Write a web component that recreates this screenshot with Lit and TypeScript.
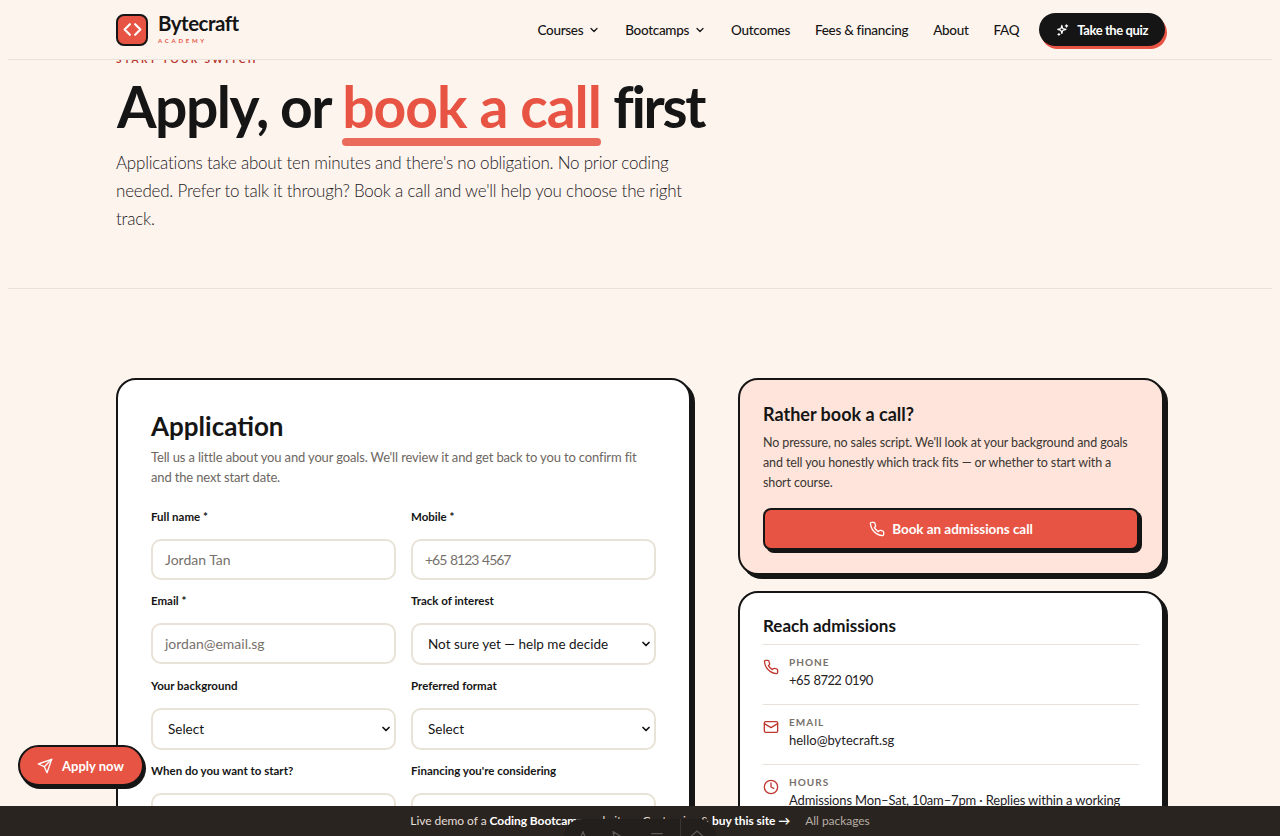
import { LitElement, html, css, svg } from "lit";
import { customElement } from "lit/decorators.js";

const ic = (body: unknown, cls = "ic") => html`<svg class=${cls} viewBox="0 0 24 24" fill="none" stroke="currentColor" stroke-width="2" stroke-linecap="round" stroke-linejoin="round">${body}</svg>`;
const phone = svg`<path d="M22 16.92v3a2 2 0 0 1-2.18 2 19.79 19.79 0 0 1-8.63-3.07 19.5 19.5 0 0 1-6-6 19.79 19.79 0 0 1-3.07-8.67A2 2 0 0 1 4.11 2h3a2 2 0 0 1 2 1.72c.13.96.36 1.9.7 2.81a2 2 0 0 1-.45 2.11L8.09 9.91a16 16 0 0 0 6 6l1.27-1.27a2 2 0 0 1 2.11-.45c.91.34 1.85.57 2.81.7A2 2 0 0 1 22 16.92z"/>`;
const mail = svg`<rect x="2" y="4" width="20" height="16" rx="2"/><path d="m22 7-10 6L2 7"/>`;
const clock = svg`<circle cx="12" cy="12" r="10"/><path d="M12 6v6l4 2"/>`;
const chev = svg`<path d="m6 9 6 6 6-6"/>`;
const spark = svg`<path d="M10 4l1.6 5.4L17 11l-5.4 1.6L10 18l-1.6-5.4L3 11l5.4-1.6z"/><path d="M18 3v4M16 5h4M5 18v3M3.5 19.5h3"/>`;
const send = svg`<path d="m22 2-7 20-4-9-9-4Z"/><path d="M22 2 11 13"/>`;

@customElement("app-root")
export class AppRoot extends LitElement {
  static styles = css`
    :host { display: block; height: 836px; overflow: hidden; position: relative; background: #fdf4ee; font-family: "Lato", "Noto Sans", sans-serif; color: #151515; }
    * { box-sizing: border-box; }
    .ic { width: 16px; height: 16px; flex: none; }
    .header { position: absolute; inset: 0 8px auto 8px; height: 60px; background: #fdf4ee; border-bottom: 1px solid #e9e2da; display: flex; align-items: center; padding: 0 107px 0 108px; z-index: 3; }
    .brand { display: flex; align-items: center; gap: 10px; }
    .logo { width: 32px; height: 32px; border-radius: 8px; background: #e85444; border: 2px solid #151515; color: #fff; display: flex; align-items: center; justify-content: center; }
    .logo svg { width: 21px; height: 21px; stroke-width: 2.5; }
    .bname { font-size: 20.5px; line-height: 22px; font-weight: 700; letter-spacing: -.5px; margin-top: -2px; }
    .bsub { font-size: 6px; line-height: 8px; letter-spacing: 2.75px; color: #e85444; font-weight: 700; margin-top: 3px; }
    nav { margin-left: auto; display: flex; align-items: center; font-size: 13.5px; letter-spacing: -.3px; font-weight: 500; gap: 25px; }
    nav span { display: flex; align-items: center; gap: 5px; }
    nav .ic { width: 12px; height: 12px; stroke-width: 2.5; }
    .quiz { background: #151515; color: #fff; font-weight: 700; font-size: 13px; letter-spacing: -.4px; height: 33px; border-radius: 17px; display: flex; align-items: center; gap: 7px; padding: 0 17px; box-shadow: 2px 3px 0 #e85444; margin-left: -5px; }
    nav .quiz .ic { width: 14px; height: 14px; stroke-width: 2; }
    main { padding: 52px 116px 0; }
    .eyebrow { font-size: 10px; line-height: 14px; font-weight: 700; letter-spacing: 2.4px; color: #b8362c; }
    h1 { margin: 5px 0 0; padding-left: 1px; font-size: 57px; line-height: 70px; font-weight: 700; letter-spacing: -1.5px; white-space: nowrap; }
    h1 em { font-style: normal; color: #e85444; position: relative; display: inline-block; letter-spacing: -1px; }
    h1 em::after { content: ""; position: absolute; left: 0; right: 0; bottom: -5px; height: 8px; border-radius: 4px; background: #ea6a5c; }
    h1 span { letter-spacing: -2.3px; }
    .lead { margin: 8px 0 0; width: 575px; font-size: 17px; letter-spacing: -.22px; line-height: 28px; font-weight: 300; color: #24201d; }
    .rule { height: 1px; background: #e9e2da; margin: 55px -108px 0; }
    .cols { display: grid; grid-template-columns: 575px 426px; gap: 47px; margin-top: 89px; }
    .card { background: #fff; border: 2px solid #151515; border-radius: 20px; box-shadow: 4px 4px 0 #151515; }
    .form { padding: 30px 33px; height: 600px; }
    h2 { margin: 0; font-size: 26px; line-height: 32px; font-weight: 700; }
    .sub { margin: 5px 0 0; font-size: 13px; letter-spacing: -.15px; line-height: 20px; color: #6d6762; }
    .grid { display: grid; grid-template-columns: 245px 245px; gap: 13px 15px; margin-top: 22px; }
    label { display: block; font-size: 11.5px; line-height: 16px; font-weight: 700; margin-bottom: 14px; }
    .in { height: 41px; border: 2px solid #e9e2d6; border-radius: 10px; background: #fff; display: flex; align-items: center; padding: 0 12px; font-size: 14px; color: #77716c; }
    .tel { letter-spacing: -1px; word-spacing: 1px; }
    .sel { color: #151515; font-size: 13.5px; padding: 0 2px 0 15px; justify-content: space-between; height: 42px; }
    .sel svg { width: 12px; height: 12px; stroke-width: 3.5; }
    .side { display: flex; flex-direction: column; gap: 16px; }
    .call { background: #fee4da; padding: 21px 23px 23px; }
    h3 { margin: 0; font-size: 18px; line-height: 26px; font-weight: 700; }
    .call p { margin: 6px 0 15px; font-size: 12.5px; letter-spacing: -.12px; line-height: 20px; color: #3b3632; }
    .btn { height: 42px; background: #e85444; border: 2px solid #151515; border-radius: 8px; box-shadow: 3px 3px 0 #151515; color: #fff; display: flex; align-items: center; justify-content: center; gap: 7px; font-size: 13.5px; letter-spacing: -.05px; font-weight: 700; }
    .reach { padding: 20px 23px; height: 300px; }
    .row { display: flex; gap: 10px; border-top: 1px solid #e9e2da; padding: 9px 0 14px; height: 60px; }
    .row .ic { color: #c0392f; margin-top: 5px; width: 16px; height: 16px; }
    .reach h3 { font-size: 17px; margin-bottom: 5px; }
    .k { font-size: 10px; line-height: 16px; font-weight: 700; letter-spacing: 1px; color: #77716c; }
    .v { font-size: 13px; line-height: 20px; color: #24211e; white-space: nowrap; }
    .v.num { letter-spacing: -.6px; word-spacing: 1px; }
    .v.long { letter-spacing: -.15px; }
    .apply { position: absolute; left: 18px; top: 745px; width: 126px; height: 41px; z-index: 4; background: #e85444; border: 2px solid #151515; border-radius: 21px; box-shadow: 2px 3px 0 #151515; color: #fff; display: flex; align-items: center; gap: 9px; padding-left: 17px; font-size: 13px; font-weight: 700; }
    .bar { position: absolute; left: 0; right: 0; bottom: 0; height: 30px; z-index: 5; background: #2a2420; color: #e6dfd8; font-size: 12px; letter-spacing: -.05px; display: flex; align-items: center; justify-content: center; gap: 15px; padding-bottom: 2px; }
    .bar b { color: #fff; font-weight: 700; }
    .muted { color: #b5ada5; }
    .dock { position: absolute; left: 564px; top: 819px; width: 152px; height: 40px; z-index: 6; border-radius: 18px; background: #231f1d; color: #5c5855; display: flex; align-items: flex-start; gap: 18px; padding: 10px 0 0 11px; }
    .dock svg { width: 16px; height: 16px; }
    .dock svg:nth-child(3) { margin-left: 6px; }
    .dock i { width: 1px; height: 30px; background: #3a3532; margin: -10px -10px 0 -3px; }
  `;

  field(l: string, ph: string, tel = false) {
    return html`<div><label>${l}</label><div class="in ${tel ? "tel" : ""}">${ph}</div></div>`;
  }
  select(l: string, v: string) {
    return html`<div><label>${l}</label><div class="in sel">${v}${ic(chev)}</div></div>`;
  }

  render() {
    return html`
      <header class="header">
        <div class="brand">
          <div class="logo">${ic(svg`<path d="m9 6-6 6 6 6M15 6l6 6-6 6"/>`)}</div>
          <div><div class="bname">Bytecraft</div><div class="bsub">ACADEMY</div></div>
        </div>
        <nav>
          <span>Courses ${ic(chev)}</span><span>Bootcamps ${ic(chev)}</span>
          <span>Outcomes</span><span>Fees &amp; financing</span><span>About</span><span>FAQ</span>
          <div class="quiz">${ic(spark)}Take the quiz</div>
        </nav>
      </header>
      <main>
        <div class="eyebrow">START YOUR SWITCH</div>
        <h1>Apply, or <em>book a call</em> <span>first</span></h1>
        <p class="lead">Applications take about ten minutes and there's no obligation. No prior coding needed. Prefer to talk it through? Book a call and we'll help you choose the right track.</p>
        <div class="rule"></div>
        <div class="cols">
          <section class="card form">
            <h2>Application</h2>
            <p class="sub">Tell us a little about you and your goals. We'll review it and get back to you to confirm fit and the next start date.</p>
            <div class="grid">
              ${this.field("Full name *", "Jordan Tan")}
              ${this.field("Mobile *", "+65 8123 4567", true)}
              ${this.field("Email *", "jordan@email.sg")}
              ${this.select("Track of interest", "Not sure yet — help me decide")}
              ${this.select("Your background", "Select")}
              ${this.select("Preferred format", "Select")}
              ${this.select("When do you want to start?", "Select")}
              ${this.select("Financing you're considering", "Select")}
            </div>
          </section>
          <div class="side">
            <section class="card call">
              <h3>Rather book a call?</h3>
              <p>No pressure, no sales script. We'll look at your background and goals and tell you honestly which track fits — or whether to start with a short course.</p>
              <div class="btn">${ic(phone)}Book an admissions call</div>
            </section>
            <section class="card reach">
              <h3>Reach admissions</h3>
              <div class="row">${ic(phone)}<div><div class="k">PHONE</div><div class="v num">+65 8722 0190</div></div></div>
              <div class="row">${ic(mail)}<div><div class="k">EMAIL</div><div class="v">hello@bytecraft.sg</div></div></div>
              <div class="row">${ic(clock)}<div><div class="k">HOURS</div><div class="v long">Admissions Mon–Sat, 10am–7pm · Replies within a working</div></div></div>
            </section>
          </div>
        </div>
      </main>
      <div class="apply">${ic(send)}Apply now</div>
      <div class="bar"><span>Live demo of a <b>Coding Bootcamp</b> website</span><span>Customize &amp; <b>buy this site →</b></span><span class="muted">All packages</span></div>
      <div class="dock">${ic(svg`<path d="M5 21 12 4l7 17M8 15h8"/>`)}${ic(svg`<path d="m6 4 13 8-7 1.5L9 20z"/>`)}${ic(svg`<path d="M4 7h16M4 13h16"/>`)}<i></i>${ic(svg`<path d="M12 3l8 7v10H4V10z"/>`)}</div>
    `;
  }
}
